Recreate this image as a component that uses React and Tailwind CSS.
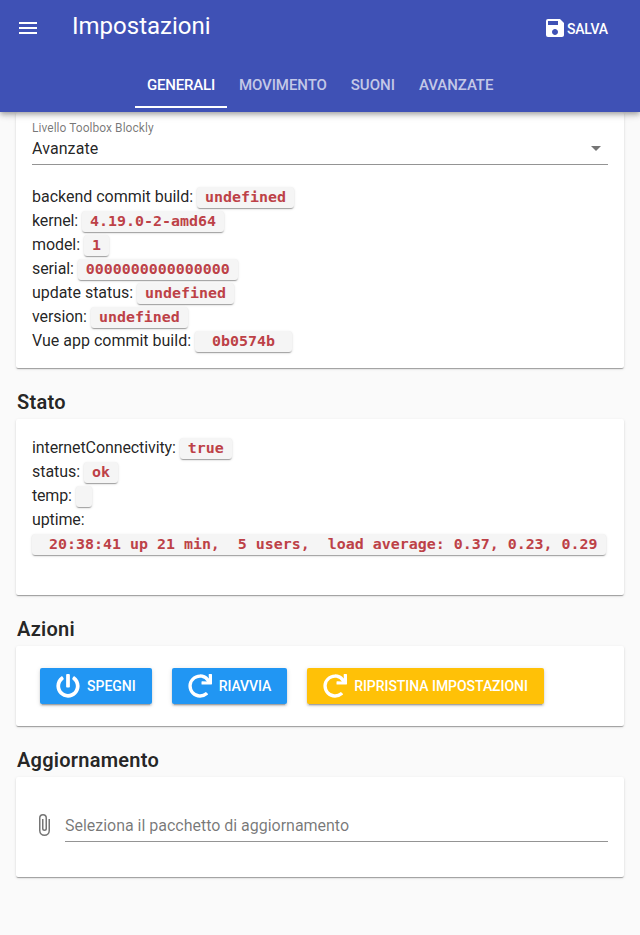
import React from "react";
import { FaPowerOff, FaRedo } from "react-icons/fa";
import { MdMenu, MdSave, MdArrowDropDown } from "react-icons/md";

const cardShadow =
  "shadow-[0_2px_1px_-1px_rgba(0,0,0,0.2),0_1px_1px_0_rgba(0,0,0,0.14),0_1px_3px_0_rgba(0,0,0,0.12)]";

const buttonShadow =
  "shadow-[0_3px_1px_-2px_rgba(0,0,0,0.2),0_2px_2px_0_rgba(0,0,0,0.14),0_1px_5px_0_rgba(0,0,0,0.12)]";

const system = [
  ["backend commit build:", "undefined", "tracking-[-0.02px]"],
  ["kernel:", "4.19.0-2-amd64", "tracking-[-0.13px]"],
  ["model:", "1", "tracking-[-0.08px]"],
  ["serial:", "0000000000000000", "tracking-[-0.1px]"],
  ["update status:", "undefined", "tracking-[-0.04px]"],
  ["version:", "undefined", "tracking-[-0.08px]"],
  ["Vue app commit build:", " 0b0574b ", "tracking-[0px]"],
];

const status = [
  ["internetConnectivity:", "true", "tracking-[-0.1px]"],
  ["status:", "ok", "tracking-[-0.05px]"],
  ["temp:", "", "tracking-[-0.2px]"],
];

const tabs = [
  ["MOVIMENTO", "tracking-[-0.08px]"],
  ["SUONI", "tracking-[0.02px]"],
  ["AVANZATE", "tracking-[-0.06px]"],
];

function Code({ children }) {
  return (
    <code
      className={`h-[21px] shrink-0 whitespace-pre rounded-[3px] bg-[#f5f5f5] px-2 font-['DejaVu_Sans_Mono',monospace] text-[14.95px] font-bold leading-[20px] text-[#bd4147] ${cardShadow}`}
    >
      {children}
    </code>
  );
}

function Row({ label, value, tracking }) {
  return (
    <div className="flex h-6 items-center gap-1">
      <span className={tracking}>{label}</span>
      <Code>{value}</Code>
    </div>
  );
}

function Heading({ children }) {
  return (
    <h2 className="h-[51px] pl-px pt-[18px] text-[20px] font-semibold leading-8 tracking-[0.25px]">
      {children}
    </h2>
  );
}

function Card({ className, children }) {
  return <section className={`rounded-[2px] bg-white px-4 ${cardShadow} ${className}`}>{children}</section>;
}

function Button({ icon: Icon, className, children }) {
  return (
    <button
      className={`flex h-9 items-center rounded-[2px] px-4 pt-px text-[14px] font-medium text-white ${buttonShadow} ${className}`}
    >
      <Icon className="-mt-px mr-[7px] size-6" />
      {children}
    </button>
  );
}

function Paperclip() {
  return (
    <svg viewBox="0 0 24 24" className="size-6 shrink-0 fill-[#757575]">
      <path d="M16.5,6V17.5A4,4 0 0,1 12.5,21.5A4,4 0 0,1 8.5,17.5V5A2.5,2.5 0 0,1 11,2.5A2.5,2.5 0 0,1 13.5,5V15.5A1,1 0 0,1 12.5,16.5A1,1 0 0,1 11.5,15.5V6H10V15.5A2.5,2.5 0 0,0 12.5,18A2.5,2.5 0 0,0 15,15.5V5A4,4 0 0,0 11,1A4,4 0 0,0 7,5V17.5A5.5,5.5 0 0,0 12.5,23A5.5,5.5 0 0,0 18,17.5V6H16.5Z" />
    </svg>
  );
}

export default function App() {
  return (
    <div className="h-[935px] w-[640px] overflow-hidden bg-[#fafafa] font-[Roboto,sans-serif] text-[16px] text-black/87">
      <header className="relative z-10 h-28 bg-[#3f51b5] text-white shadow-[0_2px_4px_-1px_rgba(0,0,0,0.2),0_4px_5px_0_rgba(0,0,0,0.14),0_1px_10px_0_rgba(0,0,0,0.12)]">
        <div className="flex h-14 items-center pl-4 pr-8">
          <MdMenu className="size-6" />
          <h1 className="ml-8 pb-[5px] text-[24px] leading-8">Impostazioni</h1>
          <button className="ml-auto flex items-center text-[14px] font-medium tracking-[-0.15px]">
            <MdSave className="size-6" />
            <span className="pt-0.5">SALVA</span>
          </button>
        </div>
        <nav className="flex h-[52px] items-stretch pl-[135px] pt-1 text-[15px] font-medium">
          <a className="flex items-center border-b-2 border-white px-3 pt-1 tracking-[-0.2px]">GENERALI</a>
          {tabs.map(([name, tracking]) => (
            <a
              key={name}
              className={`flex items-center border-b-2 border-transparent px-3 pt-1 text-white/70 ${tracking}`}
            >
              {name}
            </a>
          ))}
        </nav>
      </header>
      <main className="px-4">
        <Card className="h-64 pt-2">
          <div className="h-[45px] border-b border-[#949494]">
            <div className="h-4 text-[12px] leading-4 tracking-[0.04px] text-black/54">Livello Toolbox Blockly</div>
            <div className="flex h-6 items-center justify-between">
              <span className="pt-0.5 tracking-[0.1px]">Avanzate</span>
              <MdArrowDropDown className="size-6 text-black/54" />
            </div>
          </div>
          <div className="mt-5">
            {system.map(([label, value, tracking]) => (
              <Row key={label} label={label} value={value} tracking={tracking} />
            ))}
          </div>
        </Card>
        <Heading>Stato</Heading>
        <Card className="h-44 pt-[17px]">
          {status.map(([label, value, tracking]) => (
            <Row key={label} label={label} value={value} tracking={tracking} />
          ))}
          <div className="h-6 leading-6 tracking-[-0.12px]">uptime:</div>
          <div className="flex h-6 items-center">
            <Code>{" 20:38:41 up 21 min,  5 users,  load average: 0.37, 0.23, 0.29"}</Code>
          </div>
        </Card>
        <Heading>Azioni</Heading>
        <Card className="flex h-20 items-center gap-5 pl-6">
          <Button icon={FaPowerOff} className="bg-[#2196f3]">SPEGNI</Button>
          <Button icon={FaRedo} className="bg-[#2196f3] tracking-[-0.1px]">RIAVVIA</Button>
          <Button icon={FaRedo} className="bg-[#ffc107] tracking-[-0.04px]">RIPRISTINA IMPOSTAZIONI</Button>
        </Card>
        <Heading>Aggiornamento</Heading>
        <Card className="flex h-[100px] items-start gap-[9px] pt-8">
          <div className="pt-1">
            <Paperclip />
          </div>
          <div className="h-[33px] flex-1 border-b border-[#949494] pt-px leading-8 tracking-[-0.02px] text-black/54">
            Seleziona il pacchetto di aggiornamento
          </div>
        </Card>
      </main>
    </div>
  );
}
